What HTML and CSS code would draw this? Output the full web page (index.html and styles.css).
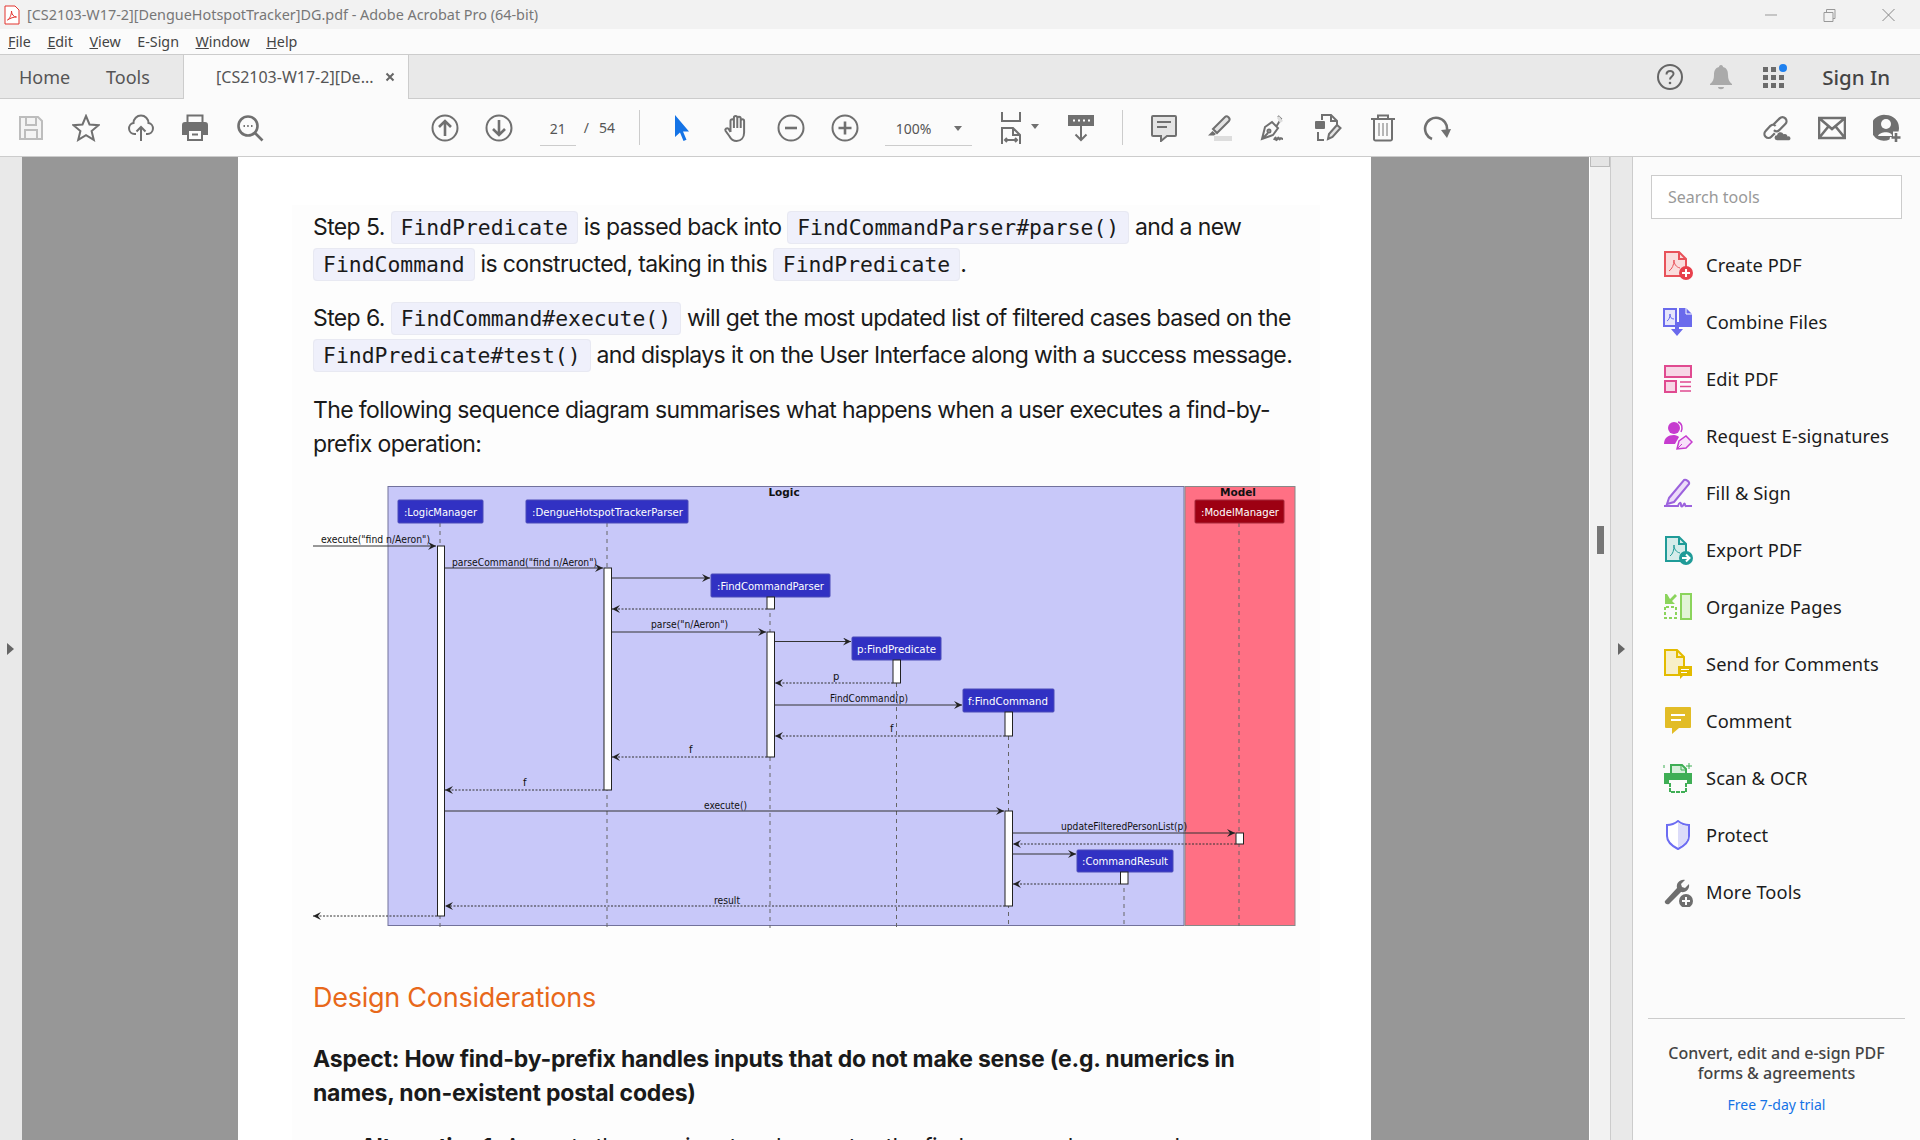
FILE: index.html
```html
<!DOCTYPE html>
<html lang="en">
<head>
  <meta charset="UTF-8" />
  <title>[CS2103-W17-2][DengueHotspotTracker]DG.pdf - Adobe Acrobat Pro (64-bit)</title>
  <link rel="stylesheet" href="styles.css">
</head>
<body>
  <svg class="defs" width="0" height="0">
    <defs>
      <marker id="head" markerWidth="9" markerHeight="8" refX="8" refY="4" orient="auto" markerUnits="userSpaceOnUse">
        <path d="M0 0L8 4L0 8L3 4z" fill="#222"/>
      </marker>
    </defs>
  </svg>

  <!-- window title -->
  <header class="titlebar">
    <svg class="doc-icon" viewBox="0 0 16 20"><path d="M1 1h10l4 4v14H1z" fill="#fff" stroke="#e3342f"/><path d="M3.5 15c2-1 4-5 4-9 0 3 2 6 5 6-3 0-6 1-9 3z" fill="none" stroke="#e3342f"/></svg>
    <span class="title">[CS2103-W17-2][DengueHotspotTracker]DG.pdf - Adobe Acrobat Pro (64-bit)</span>
    <div class="winctl">
      <svg width="58" height="14" viewBox="0 0 14 14"><path d="M1 7h12" stroke="#999"/></svg>
      <svg width="59" height="14" viewBox="0 0 14 14"><path d="M1.5 4.5h9v9h-9zM4 4.5V1.5h8.500v9h-2" fill="none" stroke="#999"/></svg>
      <svg width="59" height="14" viewBox="0 0 14 14"><path d="M1 1l12 12M13 1L1 13" stroke="#888"/></svg>
    </div>
  </header>

  <nav class="menubar">
    <span><u>F</u>ile</span>
    <span><u>E</u>dit</span>
    <span><u>V</u>iew</span>
    <span>E-Sign</span>
    <span><u>W</u>indow</span>
    <span><u>H</u>elp</span>
  </nav>

  <div class="tabbar">
    <span class="tab-link">Home</span>
    <span class="tab-link">Tools</span>
    <div class="doc-tab">
      <span>[CS2103-W17-2][De...</span>
      <svg class="tab-close" width="10" height="10" viewBox="0 0 10 10"><path d="M1.500 1.500l7 7M8.500 1.500l-7 7" stroke="#666" stroke-width="2"/></svg>
    </div>
    <div class="tab-right">
      <svg width="26" height="26" viewBox="0 0 26 26"><circle cx="13" cy="13" r="12" fill="none" stroke="#666" stroke-width="2"/><path d="M9.500 10.500c0-5 7.500-4.500 7-.5-.3 2.500-3.500 2.500-3.500 5.500" fill="none" stroke="#666" stroke-width="2"/><circle cx="13" cy="19" r="1.300" fill="#666"/></svg>
      <svg width="24" height="26" viewBox="0 0 24 26"><path d="M12 1c1.500 0 2 1 2 2 4 1 5 4 5 8 0 4 1 7 4 9v1H1v-1c3-2 4-5 4-9 0-4 1-7 5-8 0-1 .5-2 2-2zM9 23h6c0 3-6 3-6 0z" fill="#aaa"/></svg>
      <svg class="apps" width="26" height="26" viewBox="0 0 26 26"><g fill="#6b6b6b"><rect x="2" y="3" width="5" height="5"/><rect x="10" y="3" width="5" height="5"/><rect x="2" y="11" width="5" height="5"/><rect x="10" y="11" width="5" height="5"/><rect x="18" y="11" width="5" height="5"/><rect x="2" y="19" width="5" height="5"/><rect x="10" y="19" width="5" height="5"/><rect x="18" y="19" width="5" height="5"/></g><circle cx="22" cy="4" r="4" fill="#1e80ef"/></svg>
      <span class="signin">Sign In</span>
    </div>
  </div>

  <div class="toolbar">
    <div class="tool"><svg viewBox="0 0 28 28"><path d="M3 3h18l4 4v18H3z" fill="#f4f4f4" stroke="#bdbdbd"/><path d="M9 3v8h10V3M8 25v-9h12v9" fill="none" stroke="#bdbdbd"/></svg></div>
    <div class="tool"><svg viewBox="0 0 28 28"><path d="M14 2l3.500 8.500 9 .7-6.900 5.800 2.200 8.900-7.800-4.800-7.800 4.800 2.200-8.900L1.500 11.200l9-.7z"/></svg></div>
    <div class="tool"><svg viewBox="0 0 28 28"><path d="M9 20H7.500A5.500 5.500 0 0 1 6.500 9.100a7.500 7.500 0 0 1 15 0A5.500 5.500 0 0 1 20.500 20H19M14 27V13M9.500 17.500L14 13l4.500 4.500"/></svg></div>
    <div class="tool"><svg viewBox="0 0 28 28"><path d="M6.500 10V1.500h15V10" /><path class="solid" d="M4 8h20a3 3 0 0 1 3 3v10h-6v-5H7v5H1V11a3 3 0 0 1 3-3z"/><path d="M7 16h14v10H7zM11 20.500h6"/></svg></div>
    <div class="tool"><svg viewBox="0 0 28 28"><circle class="thick" cx="12" cy="12" r="9.500"/><path d="M19 19l7.500 7.500" class="thick"/><path d="M7.500 12h1.500M11.200 12h1.500M15 12h1.500"/></svg></div>

    <div class="tool tool-nav"><svg viewBox="0 0 28 28"><circle cx="14" cy="14" r="12.500"/><path class="thick" d="M14 22V7M8 13l6-6 6 6"/></svg></div>
    <div class="tool"><svg viewBox="0 0 28 28"><circle cx="14" cy="14" r="12.500"/><path class="thick" d="M14 6v15M8 15l6 6 6-6"/></svg></div>
    <span class="field page-field">21</span>
    <span class="page-slash">/</span>
    <span class="page-total">54</span>
    <i class="divider first"></i>

    <div class="tool tool-cursor"><svg viewBox="0 0 28 28"><path class="cursor" d="M8 1v22l5-4.500 3.500 8.500 3-1.300-3.500-8.300h6z"/></svg></div>
    <div class="tool"><svg viewBox="0 0 28 28"><path d="M8.500 18V7a1.700 1.700 0 0 1 3.400 0v7M11.900 14V3.700a1.700 1.700 0 0 1 3.400 0V14M15.300 14V4.500a1.700 1.700 0 0 1 3.400 0V14M18.700 14V7a1.700 1.700 0 0 1 3.400 0v11.500c0 5-3 8.500-7.500 8.500-3.500 0-5.500-1.500-7-4.500L3.500 16.800c-.9-1.700 1.400-3.400 3-2L8.500 18"/></svg></div>
    <div class="tool"><svg viewBox="0 0 28 28"><circle cx="14" cy="14" r="12.500"/><path class="thick" d="M8 14h12"/></svg></div>
    <div class="tool"><svg viewBox="0 0 28 28"><circle cx="14" cy="14" r="12.500"/><path class="thick" d="M7.500 14h13M14 7.500v13"/></svg></div>
    <span class="field zoom-field">100%<b class="caret"></b></span>
    <div class="fit"><svg viewBox="0 0 24 34" width="24" height="34"><path d="M3 1v9h18V1"/><path d="M3 33V17h11l7 7v9M14 17v7h7M6 29h12M8 27l-2 2 2 2M16 27l2 2-2 2"/></svg><b class="caret"></b></div>
    <div class="tool tool-keys"><svg viewBox="0 0 28 28"><path class="solid" d="M1 1h26v11H1z"/><path d="M14 12v14M8.500 20.500L14 26l5.500-5.500"/><path class="dots" d="M6 6.500h2M11 6.500h2M16 6.500h2M21 6.500h2"/></svg></div>
    <i class="divider"></i>

    <div class="tool tool-comment"><svg viewBox="0 0 28 28"><path class="soft" d="M3 2h22a1 1 0 0 1 1 1v18a1 1 0 0 1-1 1H17l-6 5v-5H3a1 1 0 0 1-1-1V3a1 1 0 0 1 1-1z"/><path d="M7 8h14M7 13h10"/></svg></div>
    <div class="tool"><svg viewBox="0 0 28 28"><path class="soft" d="M8 15L20 3c2-2 6 1.500 4 4L12 19z"/><path class="solid" d="M7.500 17l3.500 3-2 1.500H3z"/><rect class="bar" x="9" y="22" width="18" height="5"/></svg></div>
    <div class="tool"><svg viewBox="0 0 28 28"><path d="M3 25l3-12 7-5 6 6-5 7zM3 25l6-6M19 2l3 3-5 8"/><circle cx="10" cy="17" r="1.500"/><path d="M15 26c1-3 2-3 2-1s1 1 2-1 1 3 2 1 1 0 3 0"/><path class="bar" d="M20 2l4 5-3 2-3-5z"/></svg></div>
    <div class="tool"><svg viewBox="0 0 28 28"><path d="M8 6V1h9l6 6v8M17 1v6h6M4 18v8h6"/><rect class="solid" x="1" y="7" width="10" height="8" rx="1"/><path class="soft" d="M14 25l1-5 8-9 3.500 3-8 9z"/></svg></div>
    <div class="tool"><svg viewBox="0 0 28 28"><path d="M2 5h24M9 5V1.500h10V5M5 5v20a1.500 1.500 0 0 0 1.500 1.500h15A1.500 1.500 0 0 0 23 25V5"/><path class="fine" d="M10 9v13M14 9v13M18 9v13"/></svg></div>
    <div class="tool"><svg viewBox="0 0 28 28"><path class="thick" d="M9 25A11 11 0 1 1 24 16"/><path class="solid" d="M18 16l10-1-4 9z"/></svg></div>

    <div class="tool-right">
      <div class="tool"><svg viewBox="0 0 32 30"><path class="thick" d="M12 11l7-7a4.500 4.500 0 0 1 6.500 6.500l-7 7a4.500 4.500 0 0 1-6 0M14.500 12.500a4.500 4.500 0 0 0-6 0l-5.500 6a4.500 4.500 0 0 0 6.500 6.500l4-4"/><path class="solid" d="M16 29a2.800 2.800 0 0 1 0-5.600 4 4 0 0 1 7.500-1.400 3.300 3.300 0 0 1 4.500 2.800 2.200 2.200 0 0 1 2 4.200z"/></svg></div>
      <div class="tool"><svg viewBox="0 0 28 28"><path class="thick" d="M1 4h26v20H1zM1 4l13 11L27 4M1 24l9-11M27 24l-9-11"/></svg></div>
      <div class="tool"><svg viewBox="0 0 28 28"><path class="solid" d="M13 1a13 13 0 0 1 13 13 13 13 0 0 1-.5 3.500H20V23h-3l-.5 2.600A13 13 0 1 1 13 1z"/><circle class="cut" cx="13" cy="10" r="5"/><path class="cut" d="M5 22c2-5 14-5 14 0"/><path class="thick" d="M23 19v9M18.500 23.500h9"/></svg></div>
    </div>
  </div>

  <div class="workspace">
    <div class="side-strip"><b class="arrow"></b></div>

    <main class="viewer">
      <article class="page">
        <div class="page-body">
          <p class="code-lines">Step 5. <code>FindPredicate</code> is passed back into <code>FindCommandParser#parse()</code> and a new <code>FindCommand</code> is constructed, taking in this <code>FindPredicate</code>.</p>
          <p class="code-lines">Step 6. <code>FindCommand#execute()</code> will get the most updated list of filtered cases based on the <code>FindPredicate#test()</code> and displays it on the User Interface along with a success message.</p>
          <p class="plain">The following sequence diagram summarises what happens when a user executes a find-by-prefix operation:</p>

          <svg class="diagram" viewBox="313 480 990 450" width="990" height="450">
            <rect class="logic" x="388" y="486.500" width="796" height="439"/>
            <rect class="model" x="1185" y="486.500" width="110" height="439"/>
            <text class="title-text" x="784" y="496" text-anchor="middle">Logic</text>
            <text class="title-text" x="1238" y="496" text-anchor="middle">Model</text>

            <path class="life" d="M440 523V928M607 523V928M770 597V928M896.500 659V928M1008.500 712V928M1239 523V926M1124 872V928"/>

            <rect class="actor" x="398" y="500" width="85" height="23" rx="1"/>
            <rect class="actor" x="526" y="500" width="162" height="23" rx="1"/>
            <rect class="actor red" x="1195" y="500" width="89" height="23" rx="1"/>
            <rect class="actor" x="711" y="574" width="119" height="23" rx="1"/>
            <rect class="actor" x="852" y="637" width="89" height="23" rx="1"/>
            <rect class="actor" x="963" y="689" width="91" height="23" rx="1"/>
            <rect class="actor" x="1077" y="850" width="96" height="22" rx="1"/>
            <text class="actor-text" x="404" y="515.500" textLength="73" lengthAdjust="spacingAndGlyphs">:LogicManager</text>
            <text class="actor-text" x="532" y="515.500" textLength="151" lengthAdjust="spacingAndGlyphs">:DengueHotspotTrackerParser</text>
            <text class="actor-text" x="1201" y="515.500" textLength="78" lengthAdjust="spacingAndGlyphs">:ModelManager</text>
            <text class="actor-text" x="717" y="589.500" textLength="107" lengthAdjust="spacingAndGlyphs">:FindCommandParser</text>
            <text class="actor-text" x="857" y="652.500" textLength="79" lengthAdjust="spacingAndGlyphs">p:FindPredicate</text>
            <text class="actor-text" x="968" y="704.500" textLength="80" lengthAdjust="spacingAndGlyphs">f:FindCommand</text>
            <text class="actor-text" x="1082" y="865" textLength="86" lengthAdjust="spacingAndGlyphs">:CommandResult</text>

            <rect class="act" x="437.500" y="546" width="7" height="370"/>
            <rect class="act" x="604" y="568" width="7.500" height="222"/>
            <rect class="act" x="767" y="597" width="7.500" height="12"/>
            <rect class="act" x="767" y="632" width="7.500" height="125"/>
            <rect class="act" x="893" y="660" width="7.500" height="23"/>
            <rect class="act" x="1005" y="712" width="7.500" height="24"/>
            <rect class="act" x="1005" y="811" width="7.500" height="95"/>
            <rect class="act" x="1236" y="833" width="7.500" height="11"/>
            <rect class="act" x="1120.500" y="872" width="7.500" height="12"/>

            <line class="call" x1="313" y1="546" x2="436" y2="546"/>
            <line class="call" x1="445" y1="568" x2="603" y2="568"/>
            <line class="call" x1="612" y1="578" x2="710" y2="578"/>
            <line class="call" x1="612" y1="632" x2="766" y2="632"/>
            <line class="call" x1="775" y1="641.500" x2="851" y2="641.500"/>
            <line class="call" x1="775" y1="705" x2="962" y2="705"/>
            <line class="call" x1="445" y1="811" x2="1004" y2="811"/>
            <line class="call" x1="1013" y1="833" x2="1235" y2="833"/>
            <line class="call" x1="1013" y1="854" x2="1076" y2="854"/>
            <line class="ret" x1="767" y1="609" x2="612" y2="609"/>
            <line class="ret" x1="893" y1="683" x2="775" y2="683"/>
            <line class="ret" x1="1005" y1="736" x2="775" y2="736"/>
            <line class="ret" x1="767" y1="757" x2="612" y2="757"/>
            <line class="ret" x1="604" y1="790" x2="445" y2="790"/>
            <line class="ret" x1="1236" y1="844" x2="1013" y2="844"/>
            <line class="ret" x1="1120" y1="884" x2="1013" y2="884"/>
            <line class="ret" x1="1005" y1="906" x2="445" y2="906"/>
            <line class="ret" x1="437" y1="916" x2="313" y2="916"/>

            <text class="msg" x="321" y="542.500" textLength="109" lengthAdjust="spacingAndGlyphs">execute("find n/Aeron")</text>
            <text class="msg" x="452" y="565.500" textLength="145" lengthAdjust="spacingAndGlyphs">parseCommand("find n/Aeron")</text>
            <text class="msg" x="651" y="627.500" textLength="77" lengthAdjust="spacingAndGlyphs">parse("n/Aeron")</text>
            <text class="msg" x="833" y="680">p</text>
            <text class="msg" x="830" y="701.500" textLength="78" lengthAdjust="spacingAndGlyphs">FindCommand(p)</text>
            <text class="msg" x="890" y="731.500">f</text>
            <text class="msg" x="689" y="752.500">f</text>
            <text class="msg" x="523" y="785.500">f</text>
            <text class="msg" x="704" y="808.500" textLength="43" lengthAdjust="spacingAndGlyphs">execute()</text>
            <text class="msg" x="1061" y="829.500" textLength="126" lengthAdjust="spacingAndGlyphs">updateFilteredPersonList(p)</text>
            <text class="msg" x="714" y="903.500" textLength="26" lengthAdjust="spacingAndGlyphs">result</text>
          </svg>

          <h2>Design Considerations</h2>
          <p class="aspect">Aspect: How find-by-prefix handles inputs that do not make sense (e.g. numerics in names, non-existent postal codes)</p>
          <p class="option"><b>Alternative 1:</b> Accepts the user input and executes the find command as normal</p>
        </div>
      </article>
    </main>

    <div class="scrollbar"><i class="scroll-btn"></i><i class="scroll-thumb"></i></div>
    <div class="side-strip narrow"><b class="arrow"></b></div>

    <aside class="tools-panel">
      <input class="search" type="text" placeholder="Search tools" />
      <ul class="tools-list">
        <li>
          <svg viewBox="0 0 30 30"><path d="M2 2h14l7 7v17H2z" fill="#fadddd" stroke="#e8525a" stroke-width="2"/><path d="M16 2v7h7" fill="none" stroke="#e8525a" stroke-width="2"/><path d="M6 21c3-2 5-6 5-11 0 4 2 7 6 8" fill="none" stroke="#e8525a"/><circle cx="23" cy="23" r="7" fill="#e8404c"/><path d="M23 19v8M19 23h8" stroke="#fff" stroke-width="2"/></svg>
          Create PDF
        </li>
        <li>
          <svg viewBox="0 0 30 30"><path d="M1 2h12v17H1z" fill="#e6e6fb" stroke="#6a6aec" stroke-width="2"/><path d="M4 14c2-1 3-4 3-7 0 3 1 5 4 5" fill="none" stroke="#6a6aec"/><path d="M16 1h7l6 6v13H16z" fill="#6a6aec"/><path d="M23 1v6h6" fill="none" stroke="#fff"/><path d="M12 15h4v7h4l-6 7-6-7h4z" fill="#6a6aec"/></svg>
          Combine Files
        </li>
        <li>
          <svg viewBox="0 0 30 30"><rect x="2" y="2" width="26" height="11" fill="#f7d6e6" stroke="#e04a90" stroke-width="2"/><rect x="2" y="17" width="11" height="11" fill="#f7d6e6" stroke="#e04a90" stroke-width="2"/><path d="M17 18h11M17 22.500h11M17 27h11" stroke="#e04a90" stroke-width="1.500"/></svg>
          Edit PDF
        </li>
        <li>
          <svg viewBox="0 0 30 30"><circle cx="11" cy="7" r="6" fill="#c63ccf"/><path d="M1 23c0-6 4-9 10-9 2 0 4 1 5 2l-4 7z" fill="#c63ccf"/><path d="M15 1c4 1 5 6 3 10" fill="none" stroke="#c63ccf" stroke-width="1.500"/><path d="M14 28l2-8 7-5 6 6-6 6z" fill="#f8e0fa" stroke="#c63ccf" stroke-width="1.500"/><path d="M14 28l5-5" stroke="#c63ccf"/></svg>
          Request E-signatures
        </li>
        <li>
          <svg viewBox="0 0 30 30"><path d="M6 20L21 2c2-1 6 2 5 4L11 24l-7 2z" fill="#ecdcf9" stroke="#9c62dd" stroke-width="2"/><path d="M1 28h14c1-4 3-4 3-1s2 1 3-1 1 3 2 2h6" fill="none" stroke="#9c62dd" stroke-width="2"/></svg>
          Fill &amp; Sign
        </li>
        <li>
          <svg viewBox="0 0 30 30"><path d="M3 2h13l7 7v17H3z" fill="#d5ecea" stroke="#1f9b98" stroke-width="2"/><path d="M16 2v7h7" fill="none" stroke="#1f9b98" stroke-width="2"/><path d="M7 21c3-2 4-6 4-11 0 4 2 7 6 8" fill="none" stroke="#1f9b98"/><circle cx="23" cy="23" r="7" fill="#1f9b98"/><path d="M19 23h6M23 19.500l3.500 3.500-3.500 3.500" fill="none" stroke="#fff" stroke-width="2"/></svg>
          Export PDF
        </li>
        <li>
          <svg viewBox="0 0 30 30"><rect x="18" y="2" width="10" height="25" fill="#e2f4d6" stroke="#8bd45c" stroke-width="2"/><path d="M2 15v11h11V15z" fill="none" stroke="#8bd45c" stroke-width="2" stroke-dasharray="3 2"/><path d="M2 2v10h10l-3-3 5-5-2-2-5 5-3-5z" fill="#8bd45c"/></svg>
          Organize Pages
        </li>
        <li>
          <svg viewBox="0 0 30 30"><path d="M2 1h12l7 7v18H2z" fill="#f7efc9" stroke="#e3bb00" stroke-width="2"/><path d="M14 1v7h7" fill="none" stroke="#e3bb00" stroke-width="2"/><path d="M15 17h14v10h-9l-3 3v-3h-2z" fill="#e3bb00"/><path d="M18 20.500h8M18 23.500h6" stroke="#fff"/></svg>
          Send for Comments
        </li>
        <li>
          <svg viewBox="0 0 30 30"><path d="M3 1h24a1 1 0 0 1 1 1v19a1 1 0 0 1-1 1H16l-7 6v-6H3a1 1 0 0 1-1-1V2a1 1 0 0 1 1-1z" fill="#e2bc26"/><path d="M8 9h14M8 14h10" stroke="#fff" stroke-width="2"/></svg>
          Comment
        </li>
        <li>
          <svg viewBox="0 0 30 30"><path d="M8 11V2h11l4 4v5" fill="#d6efda" stroke="#3fae55" stroke-width="2"/><path d="M18 2v5h5" fill="none" stroke="#3fae55"/><path d="M1 10h28v11h-5v-4H6v4H1z" fill="#3fae55"/><path d="M7 20v9h16v-9" fill="none" stroke="#3fae55" stroke-width="2" stroke-dasharray="4 1"/><path d="M26 0v6M23 3h6M1 2v3" stroke="#3fae55"/></svg>
          Scan &amp; OCR
        </li>
        <li>
          <svg viewBox="0 0 30 30"><path d="M15 1c3 2.500 7 4 11 4v11c0 6-5 10-11 13-6-3-11-7-11-13V5c4 0 8-1.500 11-4z" fill="#fff" stroke="#6c6cf2" stroke-width="2"/><path d="M15 2.500c3 2 6.500 3.300 10 3.500v10c0 5-4.500 9-10 11.500z" fill="#dcdcf9"/></svg>
          Protect
        </li>
        <li>
          <svg viewBox="0 0 30 30"><path d="M2 24L14 11c-1-5 3-9 8-8l-4 4 1 3 3 1 4-4c1 5-3 9-8 8L6 27c-2 1-5-1-4-3z" fill="#6e6e6e"/><circle cx="23" cy="24" r="7" fill="#6e6e6e"/><path d="M23 20v8M19 24h8" stroke="#fbfbfb" stroke-width="2"/></svg>
          More Tools
        </li>
      </ul>
      <footer class="trial">
        <p>Convert, edit and e-sign PDF<br>forms &amp; agreements</p>
        <a href="#">Free 7-day trial</a>
      </footer>
    </aside>
  </div>
</body>
</html>
```

FILE: styles.css
```css
* {
  box-sizing: border-box;
}
html, body {
  margin: 0;
  height: 100%;
  overflow: hidden;
}
body {
  display: flex;
  flex-direction: column;
  font-family: 'Noto Sans', sans-serif;
  color: #333;
  background: #fbfbfb;
}
.defs {
  position: absolute;
}

/* window chrome */
.titlebar {
  height: 29px;
  flex: none;
  display: flex;
  align-items: center;
  background: #f2f2f2;
  padding-left: 4px;
}
.doc-icon {
  width: 16px;
  height: 20px;
  margin-right: 7px;
}
.title {
  font-size: 14.4px;
  color: #777;
}
.winctl {
  margin-left: auto;
  display: flex;
  padding-right: 2px;
}
.menubar {
  height: 26px;
  flex: none;
  display: flex;
  align-items: center;
  padding-left: 8px;
  font-size: 14.3px;
  color: #444;
  background: #fbfbfb;
  border-bottom: 1px solid #ccc;
}
.menubar span {
  margin-right: 16.5px;
}
.tabbar {
  height: 44px;
  flex: none;
  display: flex;
  align-items: stretch;
  background: #e9e9e9;
  border-bottom: 1px solid #ccc;
  font-size: 18px;
  color: #555;
}
.tab-link {
  display: flex;
  align-items: center;
  margin-left: 19px;
  width: 68px;
}
.tab-link + .tab-link {
  width: 60px;
}
.doc-tab {
  width: 226px;
  height: 44px;
  margin-left: 17px;
  padding-left: 32px;
  display: flex;
  align-items: center;
  font-size: 16px;
  background: #fbfbfb;
  border-left: 1px solid #ccc;
  border-right: 1px solid #ccc;
}
.tab-close {
  margin-left: 11px;
}
.tab-right {
  margin-left: auto;
  display: flex;
  align-items: center;
  gap: 26px;
  padding-right: 30px;
}
.apps {
  margin-left: 2px;
}
.signin {
  font-size: 20.5px;
  font-weight: 500;
  color: #444;
  margin-left: 9px;
  margin-top: 1px;
}

/* toolbar */
.toolbar {
  height: 58px;
  flex: none;
  display: flex;
  align-items: center;
  padding-left: 4px;
  background: #fbfbfb;
  border-bottom: 1px solid #ccc;
  font-size: 14px;
  color: #555;
}
.tool {
  width: 54.7px;
  flex: none;
  display: flex;
  justify-content: center;
}
.toolbar svg {
  fill: none;
  stroke: #707070;
  stroke-width: 2;
}
.tool svg {
  width: 28px;
  height: 28px;
}
.toolbar .solid {
  fill: #707070;
  stroke: none;
}
.toolbar .soft {
  fill: #e4e4e4;
}
.toolbar .bar {
  fill: #ddd;
  stroke: none;
}
.toolbar .cut {
  fill: #fbfbfb;
  stroke: none;
}
.toolbar .thick {
  stroke-width: 2.6;
}
.toolbar .fine {
  stroke-width: 1;
}
.toolbar .dots {
  stroke: #fff;
}
.toolbar .cursor {
  fill: #1473e6;
  stroke: none;
}
.tool-nav {
  margin-left: 140px;
}
.field {
  height: 33px;
  display: flex;
  align-items: center;
  justify-content: center;
  margin-top: 3px;
  border-bottom: 1px solid #ccc;
}
.page-field {
  width: 36px;
  margin-left: 13px;
}
.page-slash {
  margin-left: 8px;
}
.page-total {
  margin-left: 10px;
}
.divider {
  width: 1px;
  height: 35px;
  background: #ccc;
  margin-left: 13px;
}
.divider.first {
  margin-left: 24px;
}
.tool-cursor {
  margin-left: 14px;
}
.zoom-field {
  width: 87px;
  margin-left: 12px;
  justify-content: flex-start;
  padding-left: 11px;
}
.caret {
  width: 0;
  height: 0;
  border-left: 4px solid transparent;
  border-right: 4px solid transparent;
  border-top: 5px solid #707070;
}
.zoom-field .caret {
  margin-left: 23px;
}
.fit {
  display: flex;
  align-items: center;
  margin-left: 27px;
}
.fit .caret {
  margin-left: 8px;
  margin-bottom: 3px;
}
.tool-keys {
  margin-left: 15px;
}
.tool-comment {
  margin-left: 14px;
}
.tool-right {
  margin-left: auto;
  display: flex;
  padding-right: 6px;
}

/* document area */
.workspace {
  flex: 1;
  min-height: 0;
  display: flex;
}
.side-strip {
  width: 22px;
  flex: none;
  display: flex;
  align-items: center;
  background: #e9e9e9;
}
.side-strip.narrow {
  border-right: 1px solid #ccc;
  border-left: 1px solid #ccc;
  width: 23px;
}
.arrow {
  width: 0;
  height: 0;
  margin-left: 7px;
  border-top: 6px solid transparent;
  border-bottom: 6px solid transparent;
  border-left: 7px solid #666;
}
.viewer {
  flex: 1;
  min-width: 0;
  padding-left: 216px;
  background: #979797;
  overflow: hidden;
}
.page {
  width: 1133px;
  height: 100%;
  background: #fff;
  padding: 48px 0 0 54px;
}
.page-body {
  width: 1028px;
  height: 100%;
  padding: 4px 0 0 21px;
  background: #fdfdfd;
  font-family: Inter, sans-serif;
  font-size: 23px;
  letter-spacing: -0.62px;
  color: #1a1a1a;
}
.page-body p {
  margin: 0;
  width: 986px;
}
.code-lines {
  line-height: 36px;
}
.code-lines + .code-lines {
  margin-top: 17px;
}
.plain {
  line-height: 34px;
  margin-top: 19px !important;
}
code {
  font-family: 'DejaVu Sans Mono', monospace;
  font-size: 21.4px;
  letter-spacing: 0;
  padding: 3px 9px;
  background: #eff0fb;
  border: 1px solid #e8e9f2;
  border-radius: 4px;
}
.diagram {
  display: block;
  margin-top: 19px;
  letter-spacing: 0;
}
.logic {
  fill: #c8c8f9;
  stroke: #72729c;
}
.model {
  fill: #ff7084;
  stroke: #888;
}
.title-text {
  font: bold 10.5px 'DejaVu Sans', sans-serif;
  fill: #111;
}
.actor {
  fill: #3131c3;
  stroke: #4a4ab8;
}
.actor.red {
  fill: #9d0012;
  stroke: #a8283a;
}
.actor-text {
  font: 10.5px 'DejaVu Sans', sans-serif;
  fill: #fff;
}
.msg {
  font: 10px 'DejaVu Sans', sans-serif;
  fill: #111;
}
.life {
  fill: none;
  stroke: #666;
  stroke-dasharray: 4 4;
}
.act {
  fill: #fff;
  stroke: #222;
  stroke-width: 1;
}
.call, .ret {
  stroke: #333;
  stroke-width: 1;
  marker-end: url(#head);
}
.ret {
  stroke-dasharray: 2 1.500;
}
h2 {
  margin: 48px 0 0;
  font-size: 27px;
  line-height: 40px;
  font-weight: 400;
  letter-spacing: -0.25px;
  color: #e8681a;
}
.aspect {
  margin-top: 24px !important;
  font-weight: 700;
  letter-spacing: -0.2px;
  line-height: 34px;
}
.option {
  margin-top: 20px !important;
  padding-left: 47px;
  line-height: 34px;
  white-space: nowrap;
}

.scrollbar {
  width: 21px;
  flex: none;
  display: flex;
  flex-direction: column;
  background: #f2f2f2;
  border-left: 1px solid #fff;
}
.scroll-btn {
  height: 10px;
  background: #e4e4e4;
  border: 1px solid #bbb;
  border-top: 0;
}
.scroll-thumb {
  width: 7px;
  height: 28px;
  margin: 359px 0 0 7px;
  background: #777;
}

/* tools pane */
.tools-panel {
  width: 287px;
  flex: none;
  display: flex;
  flex-direction: column;
  padding: 18px 18px 0 18px;
  background: #fbfbfb;
}
.search {
  width: 251px;
  height: 44px;
  flex: none;
  padding: 0 16px 1px;
  font: 16px 'Noto Sans', sans-serif;
  background: #fff;
  border: 1px solid #ccc;
  border-radius: 0;
}
.search::placeholder {
  color: #999;
}
.tools-list {
  list-style: none;
  margin: 17px 0 0;
  padding: 0 0 0 12px;
  flex: 1;
}
.tools-list li {
  height: 57px;
  display: flex;
  align-items: center;
  gap: 13px;
  font-size: 18.3px;
  letter-spacing: .1px;
  color: #1c1c1c;
}
.tools-list svg {
  width: 30px;
  height: 30px;
  flex: none;
}
.trial {
  height: 122px;
  flex: none;
  width: 257px;
  margin-left: -3px;
  padding-top: 24px;
  text-align: center;
  border-top: 1px solid #ccc;
  font-size: 16px;
  font-weight: 500;
  color: #444;
}
.trial p {
  margin: 0;
  line-height: 20px;
}
.trial a {
  display: block;
  margin-top: 12px;
  font-size: 14px;
  font-weight: 400;
  color: #1473e6;
  text-decoration: none;
}
```
